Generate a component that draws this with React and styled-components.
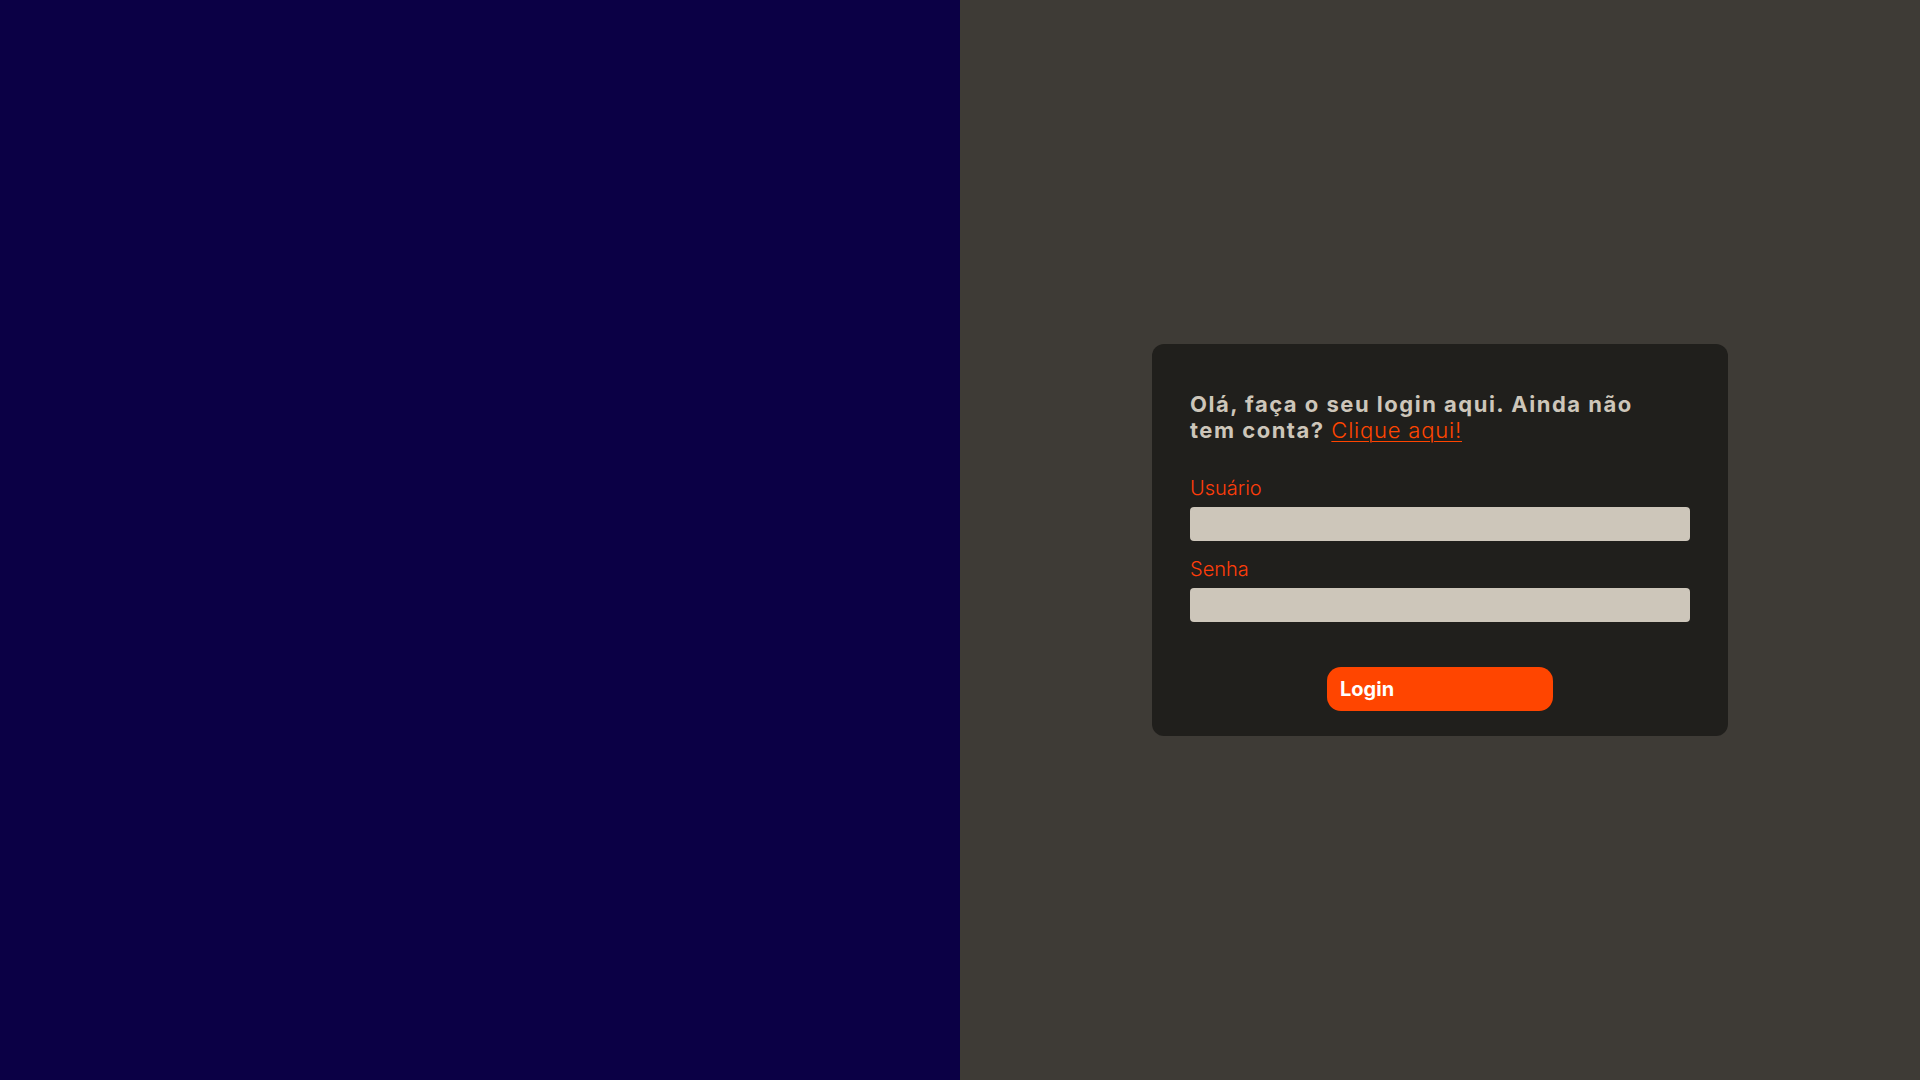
import React from "react";
import styled, { createGlobalStyle } from "styled-components";

const GlobalStyle = createGlobalStyle`
  * {
    box-sizing: border-box;
  }
  html, body {
    margin: 0;
    padding: 0;
    height: 100%;
  }
  body {
    font-family: Inter, "Liberation Sans", sans-serif;
  }
`;

const App = () => {
  return (
    <>
      <GlobalStyle />
      <Page>
        <LeftPanel />
        <RightPanel>
          <Card>
            <Title>
              Olá, faça o seu login aqui. Ainda não tem conta?{" "}
              <SignupLink href="#">Clique aqui!</SignupLink>
            </Title>
            <Form onSubmit={(e) => e.preventDefault()}>
              <Field>
                <Label htmlFor="usuario">Usuário</Label>
                <Input id="usuario" type="text" />
              </Field>
              <Field>
                <Label htmlFor="senha">Senha</Label>
                <Input id="senha" type="password" />
              </Field>
              <LoginButton type="submit">Login</LoginButton>
            </Form>
          </Card>
        </RightPanel>
      </Page>
    </>
  );
};

export default App;

/* ---------------- Styled Components ---------------- */
const Page = styled.main`
  display: grid;
  grid-template-columns: 1fr 1fr;
  width: 100vw;
  height: 100vh;
`;

const LeftPanel = styled.section`
  background: #0b0045;
`;

const RightPanel = styled.section`
  display: flex;
  align-items: center;
  justify-content: center;
  background: #3e3b36;
`;

const Card = styled.div`
  width: 576px;
  padding: 47px 38px 25px;
  background: #201f1c;
  border-radius: 12px;
`;

const Title = styled.h1`
  margin: 0;
  max-width: 460px;
  font-size: 22px;
  font-weight: 700;
  line-height: 26px;
  letter-spacing: 1.5px;
  color: #cdc6ba;
`;

const SignupLink = styled.a`
  color: #ff4500;
  font-weight: 300;
  letter-spacing: 0.8px;
  text-decoration: underline;
  text-decoration-thickness: 1px;
  text-underline-offset: 3px;
`;

const Form = styled.form`
  display: flex;
  flex-direction: column;
  gap: 17px;
  margin-top: 34px;
`;

const Field = styled.div`
  display: flex;
  flex-direction: column;
  gap: 8px;
`;

const Label = styled.label`
  font-size: 20px;
  font-weight: 300;
  line-height: 22px;
  color: #ff3d0a;
`;

const Input = styled.input`
  width: 100%;
  height: 34px;
  border: none;
  border-radius: 4px;
  background: #cdc6ba;
  padding: 0 10px;
  font-family: inherit;
  font-size: 16px;
  outline: none;
`;

const LoginButton = styled.button`
  align-self: center;
  width: 226px;
  height: 44px;
  margin-top: 28px;
  padding: 0 13px;
  border: none;
  border-radius: 14px;
  background: #ff4500;
  color: #fff;
  font-family: inherit;
  font-size: 20px;
  font-weight: 700;
  text-align: left;
  cursor: pointer;
`;
